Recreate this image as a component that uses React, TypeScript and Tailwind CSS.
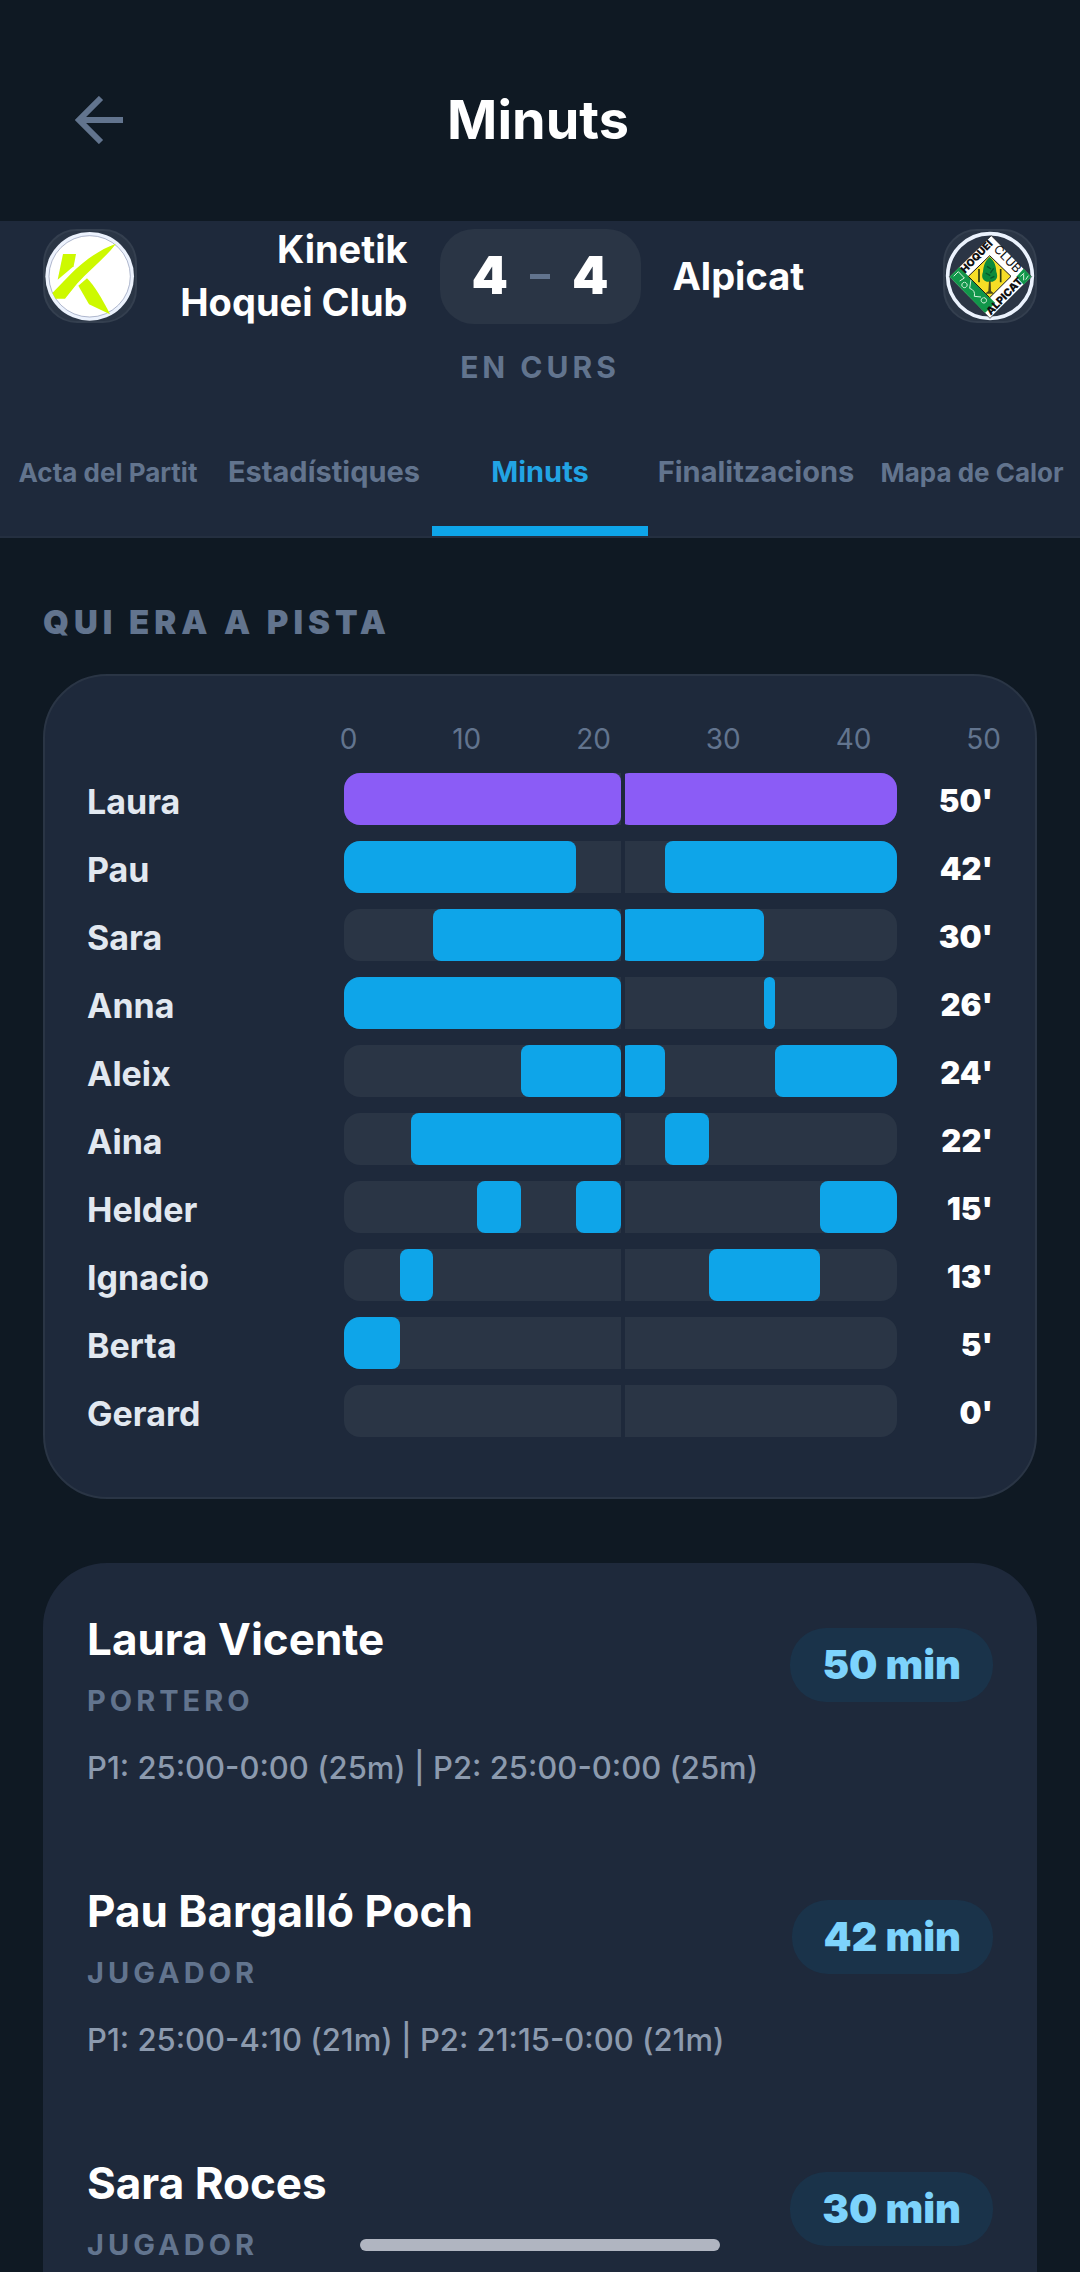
import clsx from 'clsx';

type Segment = [start: number, end: number];

interface CourtRow {
  name: string;
  minutes: number;
  keeper?: boolean;
  segments: Segment[];
}

const MATCH_MINUTES = 50;

const courtRows: CourtRow[] = [
  { name: 'Laura', minutes: 50, keeper: true, segments: [[0, 25], [25, 50]] },
  { name: 'Pau', minutes: 42, segments: [[0, 21], [29, 50]] },
  { name: 'Sara', minutes: 30, segments: [[8, 25], [25, 38]] },
  { name: 'Anna', minutes: 26, segments: [[0, 25], [38, 39]] },
  { name: 'Aleix', minutes: 24, segments: [[16, 25], [25, 29], [39, 50]] },
  { name: 'Aina', minutes: 22, segments: [[6, 25], [29, 33]] },
  { name: 'Helder', minutes: 15, segments: [[12, 16], [21, 25], [43, 50]] },
  { name: 'Ignacio', minutes: 13, segments: [[5, 8], [33, 43]] },
  { name: 'Berta', minutes: 5, segments: [[0, 5]] },
  { name: 'Gerard', minutes: 0, segments: [] },
];

const players = [
  { name: 'Laura Vicente', role: 'Portero', minutes: 50, detail: 'P1: 25:00-0:00 (25m) | P2: 25:00-0:00 (25m)' },
  { name: 'Pau Bargalló Poch', role: 'Jugador', minutes: 42, detail: 'P1: 25:00-4:10 (21m) | P2: 21:15-0:00 (21m)' },
  { name: 'Sara Roces', role: 'Jugador', minutes: 30, detail: '' },
];

const tabs = [
  { label: 'Acta del Partit', small: true },
  { label: 'Estadístiques' },
  { label: 'Minuts', active: true },
  { label: 'Finalitzacions' },
  { label: 'Mapa de Calor', small: true },
];

function KinetikCrest() {
  return (
    <svg viewBox="6 6 270 270" className="size-full" aria-hidden="true">
      <circle cx="140" cy="142" r="133" fill="#ecf2fd" />
      <circle cx="140" cy="142" r="122" fill="#fff" stroke="#8b96b4" strokeWidth="2" />
      <g fill="#cdf900">
        <path d="M60 75H99L92 112L44 152Z" />
        <path d="M219 44C168 62 120 98 84 134L28 192L38 209H66L102 164C140 122 182 92 219 44Z" />
        <path d="M106 170L132 148C154 170 178 210 201 256L138 226Z" />
      </g>
    </svg>
  );
}

function AlpicatCrest() {
  return (
    <svg viewBox="4 6 270 270" className="size-full" aria-hidden="true">
      <circle cx="139" cy="141" r="127" fill="#2b3545" stroke="#ebf2fd" strokeWidth="11" />
      <path d="M143 20L264 143L139 268L17 143Z" fill="#fff" stroke="#1b1b1b" strokeWidth="2" />
      <path d="M18 143L47 114L155 222L124 252Z" fill="#11964a" />
      <path d="M218 143L240 119L263 143L240 167Z" fill="#11964a" />
      <path d="M30 142L44 128L62 147L48 156M62 160a8 8 0 1 0 1 0M82 152L78 178Q96 184 92 202L112 204M120 206a8 8 0 1 0 1 0M230 142l12-10M240 136v18M254 140l-8 12" fill="none" stroke="#d8f2dd" strokeWidth="3" />
      <path d="M138 80L202 142L138 206L74 142Z" fill="#f6de26" stroke="#1b1b1b" strokeWidth="3" />
      <path d="M138 84C122 98 120 112 118 128C110 148 122 160 138 158C154 160 166 148 158 128C157 112 154 98 138 84Z" fill="#0b8a3c" />
      <path d="M130 112l12 8M126 132l14 8M150 118l-10 14M152 142l-12 6" stroke="#06572a" strokeWidth="4" />
      <path d="M136 156L134 186L124 194H152L142 186L141 156Z" fill="#4d4a17" />
      <path d="M106 120V160M171 120V160" stroke="#2c3b12" strokeWidth="5" />
      <g fontFamily="Inter, sans-serif" fill="#111">
        <text transform="translate(64 134) rotate(-46)" fontSize="31" fontWeight="900">HOQUEI</text>
        <text transform="translate(148 62) rotate(46)" fontSize="37">CLUB</text>
        <text transform="translate(141 260) rotate(-46)" fontSize="32" fontWeight="900">ALPICAT</text>
      </g>
    </svg>
  );
}

function Crest({ children }: { children: React.ReactNode }) {
  return (
    <div className="size-[94px] shrink-0 overflow-hidden rounded-[34px] border-2 border-[#343f4f] bg-[#2a3545]">
      {children}
    </div>
  );
}

function CourtTimeline({ row }: { row: CourtRow }) {
  return (
    <li className="flex h-[52px] items-center">
      <span className="flex-1 pt-1 text-[34px] font-bold text-slate-200">{row.name}</span>
      <div className="relative h-full w-[61%] shrink-0 overflow-hidden rounded-2xl bg-[#2a3545]">
        {row.segments.map(([start, end]) => (
          <div
            key={start}
            className={clsx('absolute inset-y-0 rounded-lg', row.keeper ? 'bg-[#8b5cf6]' : 'bg-[#0ea5e9]')}
            style={{
              left: `${(start / MATCH_MINUTES) * 100}%`,
              width: `${((end - start) / MATCH_MINUTES) * 100}%`,
            }}
          />
        ))}
        {/* Half-time divider */}
        <div className="absolute inset-y-0 left-1/2 w-1 bg-[#1e293b]" />
      </div>
      <span className="w-24 shrink-0 pt-1 text-right text-[31px] font-black text-white">{row.minutes}'</span>
    </li>
  );
}

export default function App() {
  return (
    <div className="flex h-screen flex-col overflow-hidden bg-[#0f1923] font-[Inter,sans-serif] text-white">
      <header className="flex shrink-0 items-center justify-between px-[75px] pt-[76px] pb-[57px]">
        <button type="button" aria-label="Enrere" className="size-12 text-slate-500">
          <svg viewBox="0 0 48 48" fill="none" stroke="currentColor" strokeWidth="6" className="size-full">
            <path d="M26 2L4 24L26 46M4 24H48" />
          </svg>
        </button>
        <h1 className="text-[54px] leading-[88px] font-bold">Minuts</h1>
        <div className="w-[52px]" />
      </header>

      {/* Scoreboard */}
      <section className="shrink-0 bg-[#1e293b] pt-[2px]">
        <div className="flex items-center px-[43px]">
          <Crest>
            <KinetikCrest />
          </Crest>
          <p className="flex-1 px-8 text-right text-[38px] leading-[53px] font-bold">
            Kinetik
            <br />
            Hoquei Club
          </p>
          <div className="flex h-[95px] w-[201px] shrink-0 items-center justify-center gap-[22px] rounded-[34px] bg-[#2a3545] text-[52px] font-black">
            <span>4</span>
            <span className="h-[5px] w-5 bg-slate-500" />
            <span>4</span>
          </div>
          <p className="flex-1 px-8 text-[38px] leading-[53px] font-bold">Alpicat</p>
          <Crest>
            <AlpicatCrest />
          </Crest>
        </div>
        <p className="mt-5 text-center text-[30px] leading-9 font-bold tracking-[4px] text-slate-500">EN CURS</p>

        <nav className="mt-[41px] grid grid-cols-5 border-b-2 border-[#242f40]">
          {tabs.map((tab) => (
            <a
              key={tab.label}
              href="#"
              className={clsx(
                'flex h-[110px] items-center justify-center border-b-[10px] pb-2 font-bold whitespace-nowrap',
                tab.small ? 'text-[26px]' : 'text-[29px]',
                tab.active ? 'border-[#0ea5e9] text-[#22a4e4]' : 'border-transparent text-slate-500'
              )}
            >
              {tab.label}
            </a>
          ))}
        </nav>
      </section>

      <main className="min-h-0 flex-1 overflow-y-auto px-[43px] pt-16 [scrollbar-width:none]">
        <h2 className="text-[33px] leading-10 font-black tracking-[5px] text-slate-500">QUI ERA A PISTA</h2>

        <section className="mt-8 rounded-[64px] border-2 border-[#2a3545] bg-[#1e293b] px-[42px] pt-[45px] pb-[60px]">
          <div className="flex">
            <div className="flex-1" />
            <div className="-mr-2 flex w-[73%] justify-between text-[28px] leading-9 text-slate-500">
              {[0, 10, 20, 30, 40, 50].map((tick) => (
                <span key={tick}>{tick}</span>
              ))}
            </div>
          </div>
          <ul className="mt-4 flex flex-col gap-4">
            {courtRows.map((row) => (
              <CourtTimeline key={row.name} row={row} />
            ))}
          </ul>
        </section>

        {/* Player breakdown */}
        <section className="mt-16 rounded-[64px] bg-[#1e293b] px-11 pt-[46px]">
          {players.map((player) => (
            <article key={player.name} className="mb-[88px]">
              <div className="flex items-center justify-between">
                <div>
                  <h3 className="text-[44px] leading-[60px] font-bold">{player.name}</h3>
                  <p className="mt-3 text-[29px] leading-10 font-bold tracking-[4px] text-slate-500 uppercase">
                    {player.role}
                  </p>
                </div>
                <span className="rounded-[36px] bg-[#1a334a] px-8 py-3 text-[40px] leading-[50px] font-black text-[#7dd3fc]">
                  {player.minutes} min
                </span>
              </div>
              <p className="mt-[22px] min-h-[50px] text-[31px] leading-[50px] font-medium text-[#8c9aae]">
                {player.detail}
              </p>
            </article>
          ))}
        </section>
      </main>

      {/* Home indicator */}
      <div className="fixed bottom-[21px] left-1/2 h-3 w-1/3 -translate-x-1/2 rounded-full bg-[#b0b5c1]" />
    </div>
  );
}
